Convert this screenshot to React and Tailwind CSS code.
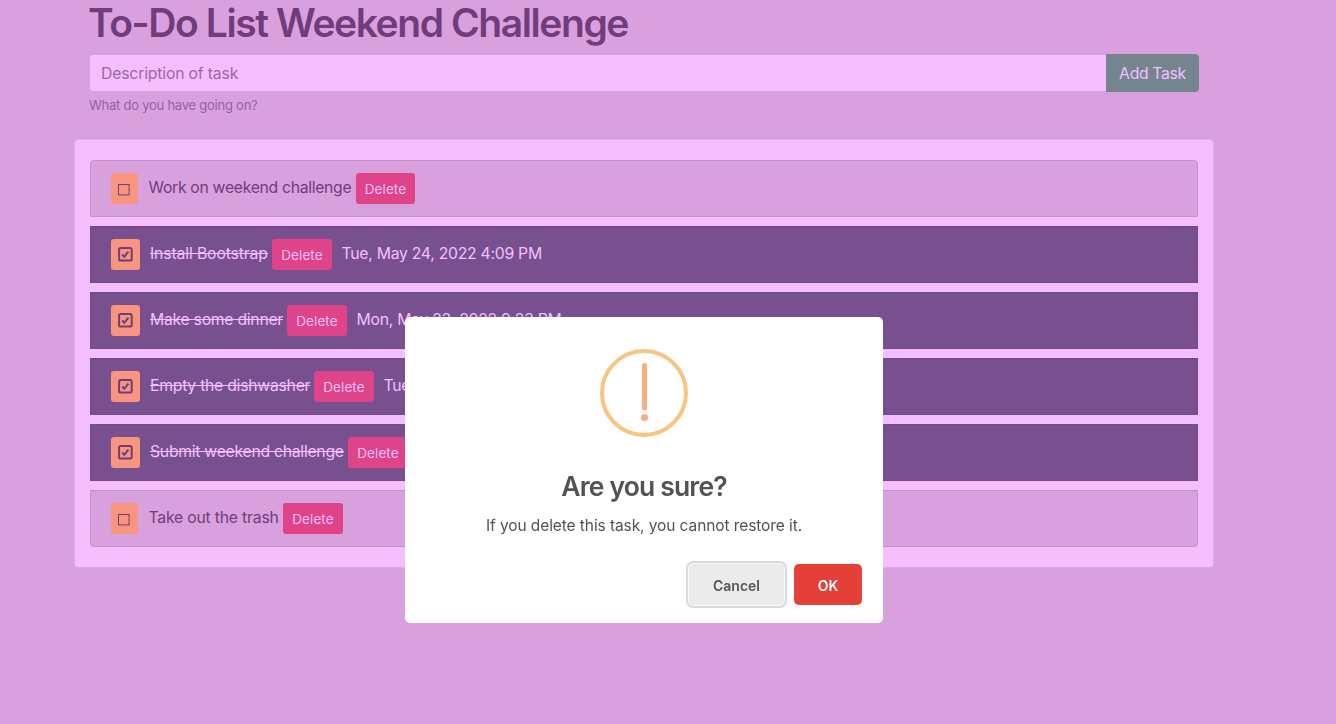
const tasks = [
  { text: 'Work on weekend challenge', width: 'w-[207px]', tracking: 'tracking-[-0.31px]', done: false, date: '', shape: 'rounded-t' },
  { text: 'Install Bootstrap', width: 'w-[122px]', tracking: 'tracking-[-0.13px]', done: true, date: 'Tue, May 24, 2022 4:09 PM', shape: '' },
  { text: 'Make some dinner', width: 'w-[137px]', tracking: 'tracking-[-0.27px]', done: true, date: 'Mon, May 23, 2022 9:23 PM', shape: '' },
  { text: 'Empty the dishwasher', width: 'w-[164px]', tracking: 'tracking-[-0.25px]', done: true, date: 'Tue, May 24, 2022 4:09 PM', shape: '' },
  { text: 'Submit weekend challenge', width: 'w-[198px]', tracking: 'tracking-[-0.27px]', done: true, date: 'Tue, May 24, 2022 4:10 PM', shape: '' },
  { text: 'Take out the trash', width: 'w-[134px]', tracking: 'tracking-[-0.2px]', done: false, date: '', shape: 'rounded-b' },
];

function CheckedIcon() {
  return (
    <svg width="15" height="15" viewBox="0 0 15 15" fill="none" stroke="#703c7c">
      <rect x="1.1" y="1" width="12.6" height="12.6" rx="1.6" strokeWidth="2" />
      <path d="M4.2 7.5 6.3 9.8 10.4 4.6" strokeWidth="2" />
    </svg>
  );
}

function EmptyIcon() {
  return (
    <svg width="12" height="12" viewBox="0 0 12 12" fill="none" stroke="#703c7c">
      <rect x="0.5" y="0.5" width="10.6" height="10.4" strokeWidth="1" />
    </svg>
  );
}

function Task({ task }) {
  const { done } = task;
  return (
    <li
      className={`flex h-[57px] items-start whitespace-nowrap border py-3 pl-5 text-[15.75px] leading-6 ${task.shape} ${
        done ? 'border-[#72498a] bg-[#79508f] text-[#f5bfff]' : 'border-[#c48fcc] bg-[#d8a1dd] text-[#703c7c]'
      }`}
    >
      <button
        className={`flex h-[31px] shrink-0 rounded-[3px] bg-[#f8957f] pl-[7px] ${
          done ? 'mr-[10px] w-[29px] pt-2' : 'mr-[11px] w-[27px] pt-[11px]'
        }`}
      >
        {done ? <CheckedIcon /> : <EmptyIcon />}
      </button>
      <span className={`shrink-0 pt-[3px] ${task.width} ${task.tracking}`}>
        <span className={done ? 'line-through' : '-ml-[0.5px]'}>{task.text}</span>
      </span>
      <button
        className={`h-[31px] shrink-0 rounded-[3px] bg-[#df4388] pt-px text-center text-[13.5px] tracking-[0.08px] text-[#f5bfff] ${
          done || task.shape === 'rounded-b' ? 'w-[60px]' : 'w-[59px]'
        }`}
      >
        Delete
      </button>
      <span className="pl-[9.5px] pt-[3px] tracking-[-0.26px]">{task.date}</span>
    </li>
  );
}

function ConfirmDialog() {
  return (
    <div className="fixed inset-0 flex justify-center pr-12 pt-[317px]">
      <div className="flex h-[306px] w-[478px] flex-col items-center rounded-[5px] bg-white pt-8">
        <svg width="88" height="88" viewBox="0 0 88 88" fill="none">
          <circle cx="44" cy="44" r="42" stroke="#f8c480" strokeWidth="4" />
          <rect x="42" y="14" width="5" height="47.5" rx="2.5" fill="#f9ae80" />
          <circle cx="44.5" cy="68.5" r="3.6" fill="#f9ae80" />
        </svg>
        <h2 className="mt-[29px] text-[26.5px] font-semibold leading-10 tracking-[-0.84px] text-[#535353]">Are you sure?</h2>
        <p className="mt-[8px] text-[15.5px] leading-6 tracking-[-0.09px] text-[#535353]">
          If you delete this task, you cannot restore it.
        </p>
        <div className="mt-[23px] flex w-full items-center justify-end gap-[7px] pr-[21px]">
          <button className="h-[47px] w-[101px] rounded-[7px] border-2 border-[#d5dbe1] bg-[#ebebeb] pt-0.5 text-sm font-semibold text-[#555555] shadow-[inset_0_0_0_1px_#f8f8f8]">
            Cancel
          </button>
          <button className="h-[41px] w-[68px] rounded-[5px] bg-[#e43f39] pt-0.5 text-sm font-semibold text-white">OK</button>
        </div>
      </div>
    </div>
  );
}

export default function App() {
  return (
    <div className="h-[724px] overflow-hidden bg-[#d8a1dd] pl-[74px] font-['Inter','Liberation_Sans',sans-serif] text-[#703c7c]">
      <header className="pl-[15px]">
        <h1 className="-ml-px h-[54px] whitespace-nowrap text-[39px] font-semibold leading-[46px] tracking-[-1.42px]">
          To-Do List Weekend Challenge
        </h1>
        <form className="flex h-[38px] w-[1110px] items-center pl-px">
          <input
            className="h-9 min-w-0 flex-1 rounded-l-[3px] bg-[#f5bfff] px-[11px] text-[15.75px] tracking-[-0.17px] outline-none placeholder:text-[#9c66ae]"
            placeholder="Description of task"
          />
          <button type="button" className="h-[38px] w-[93px] rounded-r bg-[#74858f] pt-0.5 text-[15.75px] tracking-[-0.33px] text-[#f5bfff]">
            Add Task
          </button>
        </form>
        <p className="mt-1 text-[13px] leading-[19px] tracking-[-0.24px] text-[#9460a6]">What do you have going on?</p>
      </header>
      <ul className="mt-6 flex h-[429px] w-[1140px] flex-col gap-[9px] rounded border border-[#e0a9e7] bg-[#f5bfff] px-[15px] pt-5">
        {tasks.map((task) => (
          <Task key={task.text} task={task} />
        ))}
      </ul>
      <ConfirmDialog />
    </div>
  );
}
